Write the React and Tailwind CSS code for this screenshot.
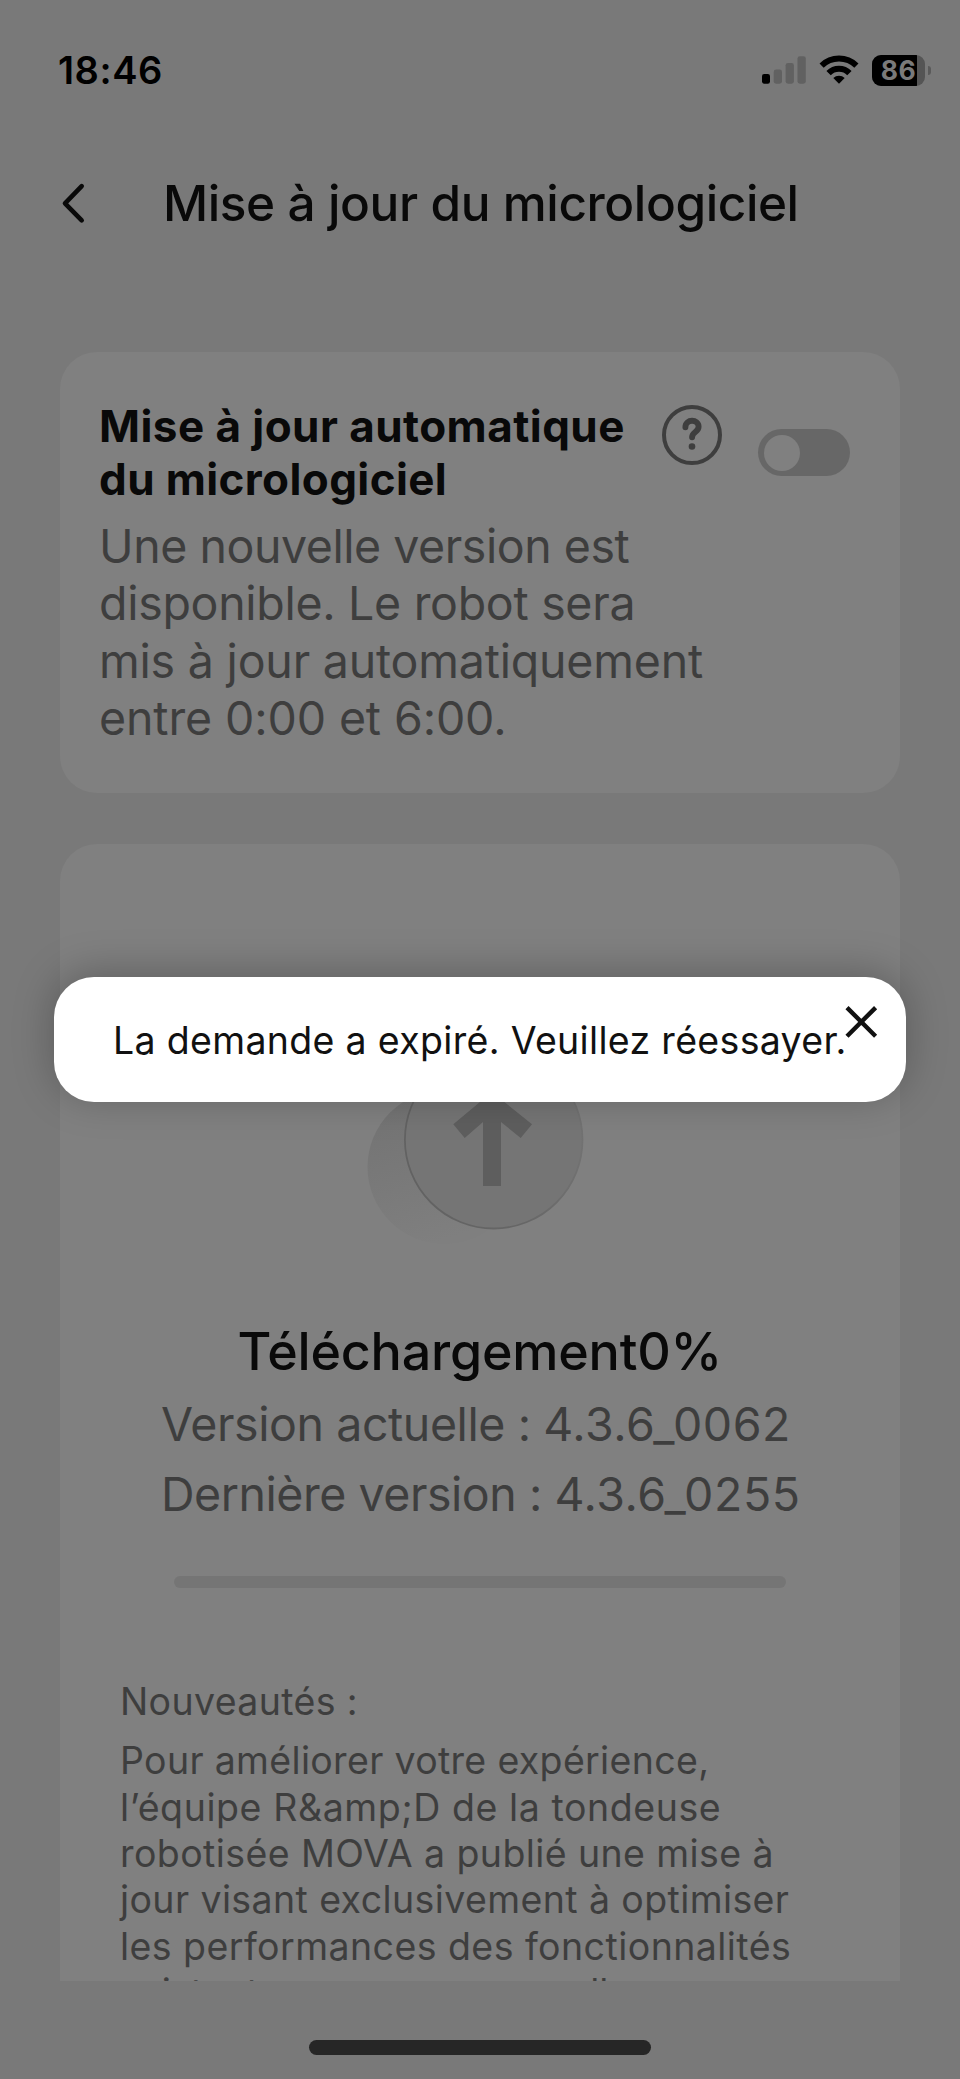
function StatusBar() {
  return (
    <div className="flex h-[140px] items-center justify-between pl-[58px] pr-[29px] text-black">
      <span className="text-[38px] leading-[48px] font-semibold tracking-[0.54px]">18:46</span>
      <div className="flex items-center">
        <svg className="h-[30px] w-[44px]" viewBox="0 0 44 30">
          <rect x="0" y="19" width="8" height="9.7" rx="2.2" fill="#000" />
          <rect x="11.7" y="14.5" width="8.3" height="14.2" rx="2.4" fill="#616161" />
          <rect x="23.6" y="7.9" width="8.3" height="20.8" rx="2.4" fill="#616161" />
          <rect x="35.5" y="1.2" width="8.3" height="27.5" rx="2.4" fill="#616161" />
        </svg>
        <svg className="ml-[13px] h-[30px] w-[40px]" viewBox="0 0 40 30" fill="none" stroke="#000" strokeWidth="6">
          <path d="M2.6 10.6A25 25 0 0 1 37.4 10.6" />
          <path d="M9.6 18.2A14.5 14.5 0 0 1 30.4 18.2" />
          <path d="M14.3 22.9A8.3 8.3 0 0 1 25.7 22.9L20 28.7Z" fill="#000" stroke="none" />
        </svg>
        <div className="ml-[13px] flex h-[31px] w-[53px] justify-start overflow-hidden rounded-[9px] bg-[#555555]">
          <div className="flex w-[45px] items-center justify-end bg-black pr-[1px] text-[26.5px] leading-[31px] font-bold tracking-[0.4px] text-[#7a7a7a]">86</div>
        </div>
        <div className="ml-[3px] h-[9px] w-[3px] rounded-r-full bg-[#5a5a5a]" />
      </div>
    </div>
  );
}

function Header() {
  return (
    <div className="flex h-[126px] items-center pl-[60px]">
      <svg className="h-[44px] w-[28px]" viewBox="0 0 28 44" fill="none" stroke="#090909" strokeWidth="4.6" strokeLinecap="round" strokeLinejoin="round">
        <path d="M21.7 5.2L5 22.3L21.7 39.4" />
      </svg>
      <h1 className="ml-[75px] text-[49.5px] leading-[60px] font-medium tracking-[-0.41px] whitespace-nowrap text-[#090909]">
        Mise à jour du micrologiciel
      </h1>
    </div>
  );
}

function AutoUpdateCard() {
  return (
    <section className="mt-[86px] h-[441px] rounded-[37px] bg-[#808080] pl-[39px]">
      <div className="flex items-start whitespace-nowrap">
        <h2 className="mt-[47.5px] w-[563px] text-[44px] leading-[53.5px] font-bold text-[#090909]">
          <span className="block tracking-[0.45px]">Mise à jour automatique</span>
          <span className="block tracking-[0.39px]">du micrologiciel</span>
        </h2>
        <svg className="mt-[53px] h-[60px] w-[60px]" viewBox="0 0 60 60" fill="none" stroke="#3e3e3e">
          <circle cx="30" cy="30" r="28" strokeWidth="4" />
          <path d="M23.4 22.2C23.4 13.6 36.6 13.6 36.6 21.8C36.6 27 30.1 27 30.1 32.2" strokeWidth="5.9" strokeLinecap="round" />
          <circle cx="30" cy="41.5" r="3.3" fill="#3e3e3e" stroke="none" />
        </svg>
        <div className="mt-[77px] ml-[36px] flex h-[47px] w-[92px] items-center rounded-full bg-[#676767] pl-[6px]">
          <div className="h-[36px] w-[36px] rounded-full bg-[#808080]" />
        </div>
      </div>
      <p className="mt-[11.5px] text-[46.5px] leading-[57.33px] whitespace-nowrap text-[#3e3e3e]">
        <span className="block tracking-[-0.45px]">Une nouvelle version est</span>
        <span className="block tracking-[-0.3px]">disponible. Le robot sera</span>
        <span className="block tracking-[-0.2px]">mis à jour automatiquement</span>
        <span className="block tracking-[-0.12px]">entre 0:00 et 6:00.</span>
      </p>
    </section>
  );
}

function UploadIcon() {
  return (
    <svg className="ml-[300px] h-[210px] w-[240px]" viewBox="360 1050 240 210">
      <defs>
        <linearGradient id="halo" x1="0.1" y1="0" x2="0.4" y2="1">
          <stop offset="0" stopColor="#727272" />
          <stop offset="0.55" stopColor="#797979" />
          <stop offset="1" stopColor="#7f7f7f" />
        </linearGradient>
        <linearGradient id="rim" x1="0" y1="0.5" x2="1" y2="0.4">
          <stop offset="0" stopColor="#626262" />
          <stop offset="0.6" stopColor="#666666" />
          <stop offset="1" stopColor="#727272" />
        </linearGradient>
      </defs>
      <circle cx="444.5" cy="1167" r="77" fill="url(#halo)" />
      <circle cx="493.7" cy="1139.7" r="88.8" fill="#757575" stroke="url(#rim)" strokeWidth="1.8" />
      <path d="M492 1092L532 1124.3L520.7 1138L501 1122V1186H483V1122L464.7 1138L453.3 1124.3Z" fill="#5e5e5e" />
    </svg>
  );
}

function FirmwareCard() {
  return (
    <section className="mt-[51px] h-[1137px] overflow-hidden rounded-t-[37px] bg-[#808080] pt-[206px] whitespace-nowrap">
      <UploadIcon />
      <h2 className="mt-[60px] pl-[177.5px] text-[52px] leading-[64px] font-medium tracking-[-0.2px] text-[#090909]">Téléchargement0%</h2>
      <div className="mt-[5px] pl-[101px] text-[46.5px] leading-[70px] text-[#3e3e3e]">
        <p>
          <span className="tracking-[-0.42px]">Version actuelle : </span>
          <span className="tracking-[0.55px]">4.3.6_0062</span>
        </p>
        <p>
          <span className="tracking-[-0.46px]">Dernière version : </span>
          <span className="tracking-[0.55px]">4.3.6_0255</span>
        </p>
      </div>
      <div className="mt-[47px] ml-[114px] h-[12px] w-[612px] rounded-full bg-[#757575]" />
      <div className="mt-[91px] pl-[60px] text-[37.5px] leading-[46.4px] text-[#3e3e3e]">
        <h3 className="tracking-[0.35px]">Nouveautés :</h3>
        <p className="mt-[12.8px]">
          <span className="block tracking-[0.33px]">Pour améliorer votre expérience,</span>
          <span className="block tracking-[0.58px]">{"l’équipe R&amp;D de la tondeuse"}</span>
          <span className="block tracking-[0.41px]">robotisée MOVA a publié une mise à</span>
          <span className="block tracking-[0.4px]">jour visant exclusivement à optimiser</span>
          <span className="block tracking-[0.44px]">les performances des fonctionnalités</span>
          <span className="block tracking-[0.08px]">existantes pour une nouvelle</span>
        </p>
      </div>
    </section>
  );
}

function Toast() {
  return (
    <div role="alert" className="absolute top-[977px] left-[54px] flex h-[125px] w-[852px] items-start rounded-[40px] bg-white pl-[59px] shadow-[0_-5px_40px_rgba(0,0,0,0.26)]">
      <p className="w-[731px] pt-[39.5px] text-[37.5px] leading-[48px] tracking-[0.32px] whitespace-nowrap text-[#111111]">
        La demande a expiré. Veuillez réessayer.
      </p>
      <svg className="mt-[28px] h-[34px] w-[34px]" viewBox="0 0 34 34" fill="none" stroke="#111111" strokeWidth="4.4">
        <path d="M3 2.6L31.6 31.2M31.6 2.6L3 31.2" />
      </svg>
    </div>
  );
}

export default function App() {
  return (
    <div className="relative h-[2079px] w-[960px] overflow-hidden bg-[#797979] font-['Inter',sans-serif]">
      <StatusBar />
      <Header />
      <main className="px-[60px]">
        <AutoUpdateCard />
        <FirmwareCard />
      </main>
      <div className="mx-auto mt-[59px] h-[15px] w-[342px] rounded-full bg-[#262626]" />
      <Toast />
    </div>
  );
}
